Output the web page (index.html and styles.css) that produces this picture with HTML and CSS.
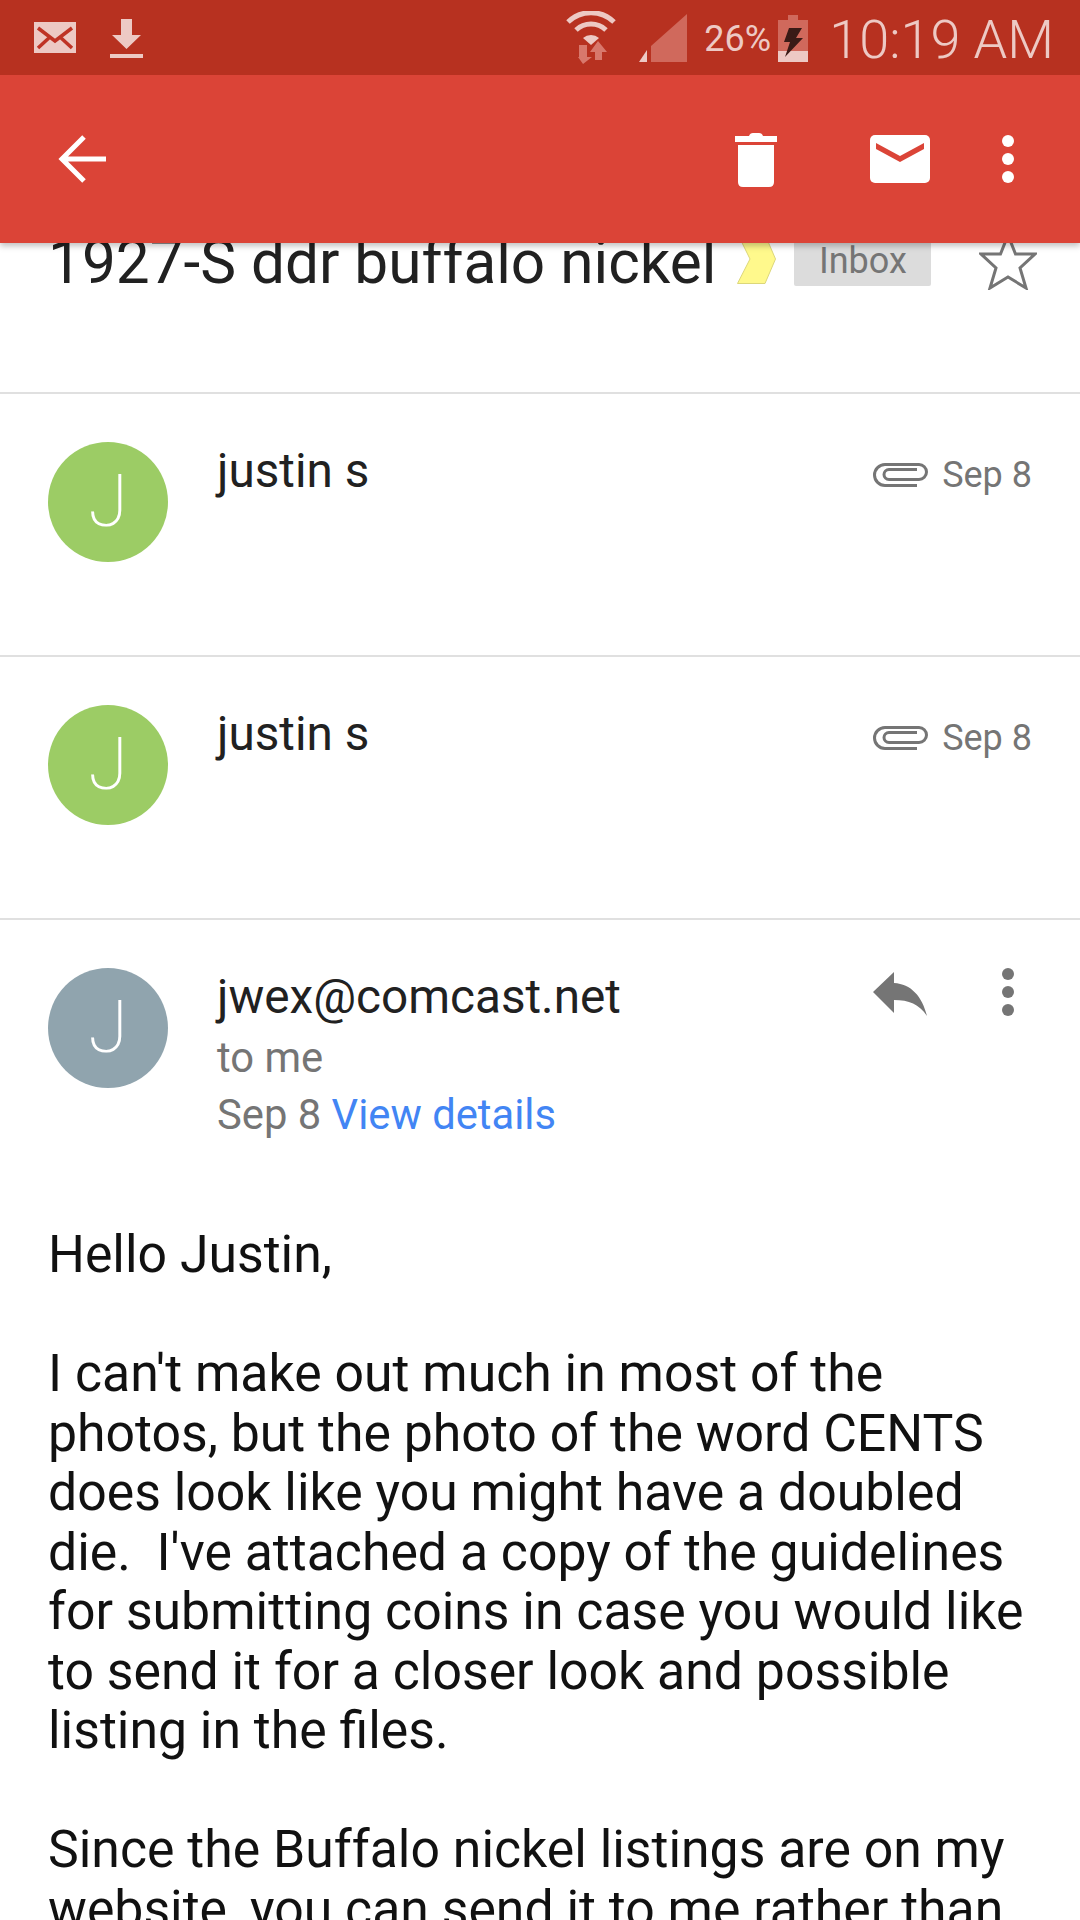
FILE: index.html
```html
<!DOCTYPE html>
<html lang="en">
<head>
	<meta charset="utf-8">
	<title>1927-S ddr buffalo nickel</title>
	<link rel="stylesheet" href="styles.css">
</head>
<body>

<div id="status">
	<svg class="st-mail" width="42" height="31" viewBox="0 0 42 31">
		<rect width="42" height="31" fill="#edc9c4"/>
		<path d="M4 6 L21 19 L38 6 M4 26 L16 15 M38 26 L26 15" fill="none" stroke="#bf3325" stroke-width="3.500"/>
	</svg>
	<svg class="st-down" width="33" height="39" viewBox="0 0 33 39">
		<path d="M11 0 H22 V16 H31 L16.500 30 L2 16 H11 Z M0 35 H33 V39 H0 Z" fill="#edc9c4"/>
	</svg>
	<svg class="st-wifi" width="50" height="53" viewBox="0 0 50 53">
		<path d="M2 11 A33 33 0 0 1 48 11" fill="none" stroke="#edc9c4" stroke-width="5"/>
		<path d="M10 19 A22 22 0 0 1 40 19" fill="none" stroke="#edc9c4" stroke-width="5"/>
		<path d="M17 27 A12 12 0 0 1 33 27 L25 34 Z" fill="#edc9c4"/>
		<path d="M14 34 H22 V46 H27 L18 53 L13 46 H14 Z" fill="#d8786c" transform="translate(-1 0)"/>
		<path d="M32 30 L41 41 H36 V49 H29 V41 H24 Z" fill="#d8786c"/>
	</svg>
	<svg class="st-signal" width="48" height="48" viewBox="0 0 48 48">
		<path d="M48 0 V48 H12 V32 Z" fill="#d0695c"/>
		<path d="M8 36 V48 H0 Z" fill="#edc9c4"/>
	</svg>
	<span class="st-pct">26%</span>
	<svg class="st-batt" width="30" height="47" viewBox="0 0 30 47">
		<path d="M10 0 H20 V5 H30 V36 H0 V5 H10 Z" fill="#d0695c"/>
		<rect y="36" width="30" height="11" fill="#edc9c4"/>
		<path d="M11 13 H24 L18 23 H25 L7 42 L12 27 H6 Z" fill="#3a1a16"/>
	</svg>
	<span class="st-time">10:19 AM</span>
</div>

<div id="toolbar">
	<svg class="tb-back" width="48" height="48" viewBox="0 0 48 48">
		<path d="M48 24 H4 M26 2 L4 24 L26 46" fill="none" stroke="#fff" stroke-width="5"/>
	</svg>
	<svg class="tb-trash" width="42" height="54" viewBox="0 0 42 54">
		<path d="M0 3 H14 Q15 0 18 0 H24 Q27 0 28 3 H42 V9 H0 Z" fill="#fff"/>
		<path d="M3 12 H39 V49 Q39 54 34 54 H8 Q3 54 3 49 Z" fill="#fff"/>
	</svg>
	<svg class="tb-mail" width="60" height="48" viewBox="0 0 60 48">
		<rect width="60" height="48" rx="5" fill="#fff"/>
		<path d="M6 8 V14 L30 27 L54 14 V8 L30 21 Z" fill="#db4437"/>
	</svg>
	<svg class="tb-more" width="12" height="48" viewBox="0 0 12 48">
		<circle cx="6" cy="6" r="6" fill="#fff"/>
		<circle cx="6" cy="24" r="6" fill="#fff"/>
		<circle cx="6" cy="42" r="6" fill="#fff"/>
	</svg>
</div>

<div id="thread">
	<div class="subject">
		<span class="subject-text">1927-S ddr buffalo nickel</span>
		<svg class="chevron" width="39" height="50" viewBox="0 0 39 50">
			<path d="M0.500 49.500 L13 25 L1 0.500 H28 L38.500 25 L28 49.500 Z" fill="#fff98c" stroke="#dcd77a"/>
		</svg>
		<span class="chip">Inbox</span>
		<svg class="star" width="58" height="56" viewBox="0 0 58 56">
			<path d="M29 1 L36.500 20 H56 L41 34 L47 54 L29 43 L11 54 L17 34 L2 20 H21.500 Z" fill="none" stroke="#757575" stroke-width="3"/>
		</svg>
	</div>

	<div class="row">
		<div class="avatar green">J</div>
		<div class="name">justin s</div>
		<div class="meta">
			<svg class="clip" width="56" height="24" viewBox="0 0 56 24">
				<path d="M44 22.500 H12 A10.500 10.500 0 0 1 12 1.500 H46 A7.500 7.500 0 0 1 46 16.500 H16 A5 5 0 0 1 16 6.500 H44" fill="none" stroke="#757575" stroke-width="3"/>
			</svg>
			<span class="date">Sep 8</span>
		</div>
	</div>

	<div class="row">
		<div class="avatar green">J</div>
		<div class="name">justin s</div>
		<div class="meta">
			<svg class="clip" width="56" height="24" viewBox="0 0 56 24">
				<path d="M44 22.500 H12 A10.500 10.500 0 0 1 12 1.500 H46 A7.500 7.500 0 0 1 46 16.500 H16 A5 5 0 0 1 16 6.500 H44" fill="none" stroke="#757575" stroke-width="3"/>
			</svg>
			<span class="date">Sep 8</span>
		</div>
	</div>

	<div class="open-head">
		<div class="avatar slate">J</div>
		<div class="sender">
			<div class="name">jwex@comcast.net</div>
			<div class="sub first">to me</div>
			<div class="sub">Sep 8 <a class="details" href="#">View details</a></div>
		</div>
		<svg class="reply" width="54" height="44" viewBox="0 0 54 44">
			<path d="M0 20 L21 0 V11 C38 12 49 24 54 44 C46 32 36 28 21 28 V41 Z" fill="#757575"/>
		</svg>
		<svg class="msg-more" width="12" height="48" viewBox="0 0 12 48">
			<circle cx="6" cy="6" r="6" fill="#757575"/>
			<circle cx="6" cy="24" r="6" fill="#757575"/>
			<circle cx="6" cy="42" r="6" fill="#757575"/>
		</svg>
	</div>

	<div class="body-text">
		<p>Hello Justin,</p>
		<p>I can't make out much in most of the photos, but the photo of the word CENTS does look like you might have a doubled die.&nbsp; I've attached a copy of the guidelines for submitting coins in case you would like to send it for a closer look and possible listing in the files.</p>
		<p>Since the Buffalo nickel listings are on my website, you can send it to me rather than</p>
	</div>
</div>

</body>
</html>
```

FILE: styles.css
```css
html, body {
	margin: 0;
	height: 1920px;
	overflow: hidden;
	background: #fff;
}
body {
	font-family: Roboto, "Liberation Sans", sans-serif;
	color: #212121;
}
svg {display: block; flex: none;}

/* status bar */
#status {
	height: 75px;
	background: #b73120;
	color: #edc9c4;
	display: flex;
	align-items: center;
	padding: 0 26px 0 34px;
	box-sizing: border-box;
	position: relative;
	z-index: 3;
}
.st-down {margin-left: 34px; margin-top: 2px;}
.st-wifi {margin-left: auto; margin-top: 0;}
.st-signal {margin-left: 23px; margin-top: 1px;}
.st-pct {margin-left: 17px; font-size: 36px; width: 64px; white-space: nowrap; margin-top: 3px;}
.st-batt {margin-left: 10px; margin-top: 1px;}
.st-time {margin-left: 21px; font-size: 54px; font-weight: 300; white-space: nowrap; margin-top: 3px;}

/* toolbar */
#toolbar {
	height: 168px;
	background: #db4437;
	display: flex;
	align-items: center;
	padding: 0 66px 0 58px;
	box-sizing: border-box;
	box-shadow: 0 3px 6px rgba(0, 0, 0, 0.25);
	position: relative;
	z-index: 2;
}
.tb-trash {margin-left: auto; margin-top: 2px;}
.tb-mail {margin-left: 93px;}
.tb-more {margin-left: 72px;}

/* subject */
.subject {
	height: 151px;
	box-sizing: border-box;
	border-bottom: 2px solid #e0e0e0;
	padding: 0 43px 0 48px;
	display: flex;
	align-items: flex-start;
	overflow: hidden;
}
.subject-text {
	font-size: 60.300px;
	line-height: 60px;
	margin-top: -10px;
	white-space: nowrap;
}
.chevron {margin: -9px 0 0 21px;}
.chip {
	margin: -10px 0 0 18px;
	width: 137px;
	height: 53px;
	box-sizing: border-box;
	background: #dcdcdc;
	border-radius: 2px;
	color: #757575;
	font-size: 36px;
	line-height: 57px;
	text-align: center;
}
.star {margin: -9px 0 0 auto;}

/* collapsed messages */
.row {
	height: 263px;
	box-sizing: border-box;
	border-bottom: 2px solid #e0e0e0;
	padding: 48px 48px 0 48px;
	display: flex;
	align-items: flex-start;
}
.avatar {
	width: 120px;
	height: 120px;
	border-radius: 50%;
	color: #fff;
	font-size: 72px;
	font-weight: 200;
	line-height: 120px;
	text-align: center;
	flex: none;
}
.green {background: #9ccc65;}
.slate {background: #90a4ae;}
.name {
	font-size: 47.700px;
	line-height: 54px;
	margin: 2px 0 0 49px;
}
.meta {
	margin-left: auto;
	display: flex;
	align-items: center;
	margin-top: 9px;
}
.date {
	margin-left: 13px;
	font-size: 36px;
	line-height: 48px;
	color: #757575;
}

/* open message */
.open-head {
	padding: 48px 0 0 48px;
	height: 305px;
	box-sizing: border-box;
	display: flex;
	align-items: flex-start;
}
.sender {flex: 1;}
.sub {
	margin-left: 49px;
	font-size: 41.750px;
	line-height: 57px;
	color: #757575;
}
.sub.first {margin-top: 5px;}
.details {color: #4285f4; text-decoration: none;}
.reply {margin: 4px 0 0 0;}
.msg-more {margin: 0 66px 0 75px;}

.body-text {
	padding: 0 30px 0 48px;
	font-size: 51.750px;
	line-height: 59.500px;
	color: #111;
}
.body-text p {margin: 0 0 59.500px 0;}
```
